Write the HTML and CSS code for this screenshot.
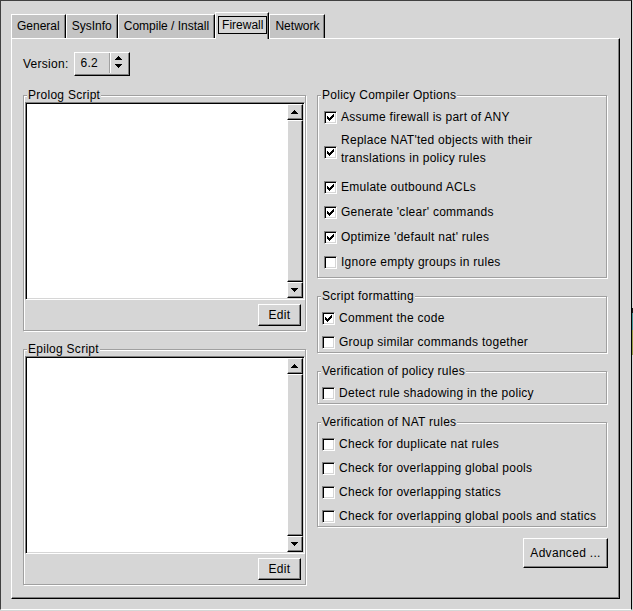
FILE: index.html
```html
<!DOCTYPE html>
<html>
<head>
<meta charset="utf-8">
<title>Firewall settings</title>
<link rel="stylesheet" href="styles.css">
</head>
<body>
<div class="window">
  <div class="tabbar">
    <div class="tab">General</div>
    <div class="tab">SysInfo</div>
    <div class="tab">Compile / Install</div>
    <div class="tab tab-active"><span class="focus">Firewall</span></div>
    <div class="tab">Network</div>
  </div>
  <div class="pane">
    <div class="version-row">
      <span class="label">Version:</span>
      <div class="spin">
        <span class="spin-value">6.2</span>
        <span class="spin-sep"></span>
        <svg class="spin-arrows" width="7" height="12" viewBox="0 0 7 12"><path d="M3 0h1v1h1v1h1v1h1v1H0V3h1V2h1V1h1z M0 8h7v1H6v1H5v1H4v1H3v-1H2v-1H1V9H0z" fill="#000"/></svg>
      </div>
    </div>
    <div class="columns">
      <div class="col-left">
        <div class="group group-script">
          <div class="legend">Prolog Script</div>
          <div class="textframe">
            <div class="viewport"></div>
            <div class="scrollbar">
              <div class="sb-btn"><svg width="7" height="4" viewBox="0 0 7 4"><path d="M3 0h1v1h1v1h1v1h1v1H0V3h1V2h1V1h1z" fill="#000"/></svg></div>
              <div class="sb-slider"></div>
              <div class="sb-btn"><svg width="7" height="4" viewBox="0 0 7 4"><path d="M0 0h7v1H6v1H5v1H4v1H3V3H2V2H1V1H0z" fill="#000"/></svg></div>
            </div>
          </div>
          <div class="btn-row"><button class="btn btn-edit">Edit</button></div>
        </div>
        <div class="group group-script group-gap">
          <div class="legend">Epilog Script</div>
          <div class="textframe">
            <div class="viewport"></div>
            <div class="scrollbar">
              <div class="sb-btn"><svg width="7" height="4" viewBox="0 0 7 4"><path d="M3 0h1v1h1v1h1v1h1v1H0V3h1V2h1V1h1z" fill="#000"/></svg></div>
              <div class="sb-slider"></div>
              <div class="sb-btn"><svg width="7" height="4" viewBox="0 0 7 4"><path d="M0 0h7v1H6v1H5v1H4v1H3V3H2V2H1V1H0z" fill="#000"/></svg></div>
            </div>
          </div>
          <div class="btn-row"><button class="btn btn-edit">Edit</button></div>
        </div>
      </div>
      <div class="col-right">
        <div class="group group-policy">
          <div class="legend">Policy Compiler Options</div>
          <div class="checks checks-policy">
            <div class="check"><span class="box"><svg width="7" height="7" viewBox="0 0 7 7"><path d="M0 2h1v1h1v1h1V3h1V2h1V1h1V0h1v3H6v1H5v1H4v1H3v1H2V6H1V5H0z" fill="#000"/></svg></span><span class="text">Assume firewall is part of ANY</span></div>
            <div class="check check-2"><span class="box"><svg width="7" height="7" viewBox="0 0 7 7"><path d="M0 2h1v1h1v1h1V3h1V2h1V1h1V0h1v3H6v1H5v1H4v1H3v1H2V6H1V5H0z" fill="#000"/></svg></span><span class="text">Replace NAT'ted objects with their<br>translations in policy rules</span></div>
            <div class="check"><span class="box"><svg width="7" height="7" viewBox="0 0 7 7"><path d="M0 2h1v1h1v1h1V3h1V2h1V1h1V0h1v3H6v1H5v1H4v1H3v1H2V6H1V5H0z" fill="#000"/></svg></span><span class="text">Emulate outbound ACLs</span></div>
            <div class="check"><span class="box"><svg width="7" height="7" viewBox="0 0 7 7"><path d="M0 2h1v1h1v1h1V3h1V2h1V1h1V0h1v3H6v1H5v1H4v1H3v1H2V6H1V5H0z" fill="#000"/></svg></span><span class="text">Generate 'clear' commands</span></div>
            <div class="check"><span class="box"><svg width="7" height="7" viewBox="0 0 7 7"><path d="M0 2h1v1h1v1h1V3h1V2h1V1h1V0h1v3H6v1H5v1H4v1H3v1H2V6H1V5H0z" fill="#000"/></svg></span><span class="text">Optimize 'default nat' rules</span></div>
            <div class="check"><span class="box"></span><span class="text">Ignore empty groups in rules</span></div>
          </div>
        </div>
        <div class="group group-small group-gap">
          <div class="legend">Script formatting</div>
          <div class="checks">
            <div class="check"><span class="box"><svg width="7" height="7" viewBox="0 0 7 7"><path d="M0 2h1v1h1v1h1V3h1V2h1V1h1V0h1v3H6v1H5v1H4v1H3v1H2V6H1V5H0z" fill="#000"/></svg></span><span class="text">Comment the code</span></div>
            <div class="check"><span class="box"></span><span class="text">Group similar commands together</span></div>
          </div>
        </div>
        <div class="group group-small group-gap">
          <div class="legend">Verification of policy rules</div>
          <div class="checks">
            <div class="check"><span class="box"></span><span class="text">Detect rule shadowing in the policy</span></div>
          </div>
        </div>
        <div class="group group-small group-gap">
          <div class="legend">Verification of NAT rules</div>
          <div class="checks">
            <div class="check"><span class="box"></span><span class="text">Check for duplicate nat rules</span></div>
            <div class="check"><span class="box"></span><span class="text">Check for overlapping global pools</span></div>
            <div class="check"><span class="box"></span><span class="text">Check for overlapping statics</span></div>
            <div class="check"><span class="box"></span><span class="text">Check for overlapping global pools and statics</span></div>
          </div>
        </div>
        <button class="btn btn-advanced">Advanced ...</button>
      </div>
    </div>
  </div>
</div>
</body>
</html>
```

FILE: styles.css
```css
* {
  box-sizing: border-box;
}

html,
body {
  margin: 0;
  padding: 0;
}

body {
  width: 633px;
  height: 611px;
  overflow: hidden;
  font-family: "Liberation Sans", Arial, sans-serif;
  font-size: 12px;
  letter-spacing: 0.27px;
  color: #000;
  background: linear-gradient(#d6d6d6 0 308px, #1a1a1a 308px 313px, #4a9a9a 313px 330px, #9aa04a 330px 355px, #d6d6d6 355px);
}

.window {
  width: 632px;
  height: 610px;
  background: #d6d6d6;
  border-top: 1px solid #404040;
  border-left: 1px solid #404040;
  border-right: 1px solid #000;
  border-bottom: 1px solid #fff;
  padding: 11px 0 0 10px;
}

/* ---------- tabs ---------- */
.tabbar {
  display: flex;
  align-items: flex-end;
  height: 26px;
  letter-spacing: 0;
}

.tab {
  height: 24px;
  line-height: 23px;
  padding: 0 5px;
  background: #c4c4c4;
  border-top: 1px solid #fff;
  border-left: 1px solid #fff;
  border-right: 1px solid #000;
  box-shadow: inset -1px 0 0 #808080;
  white-space: nowrap;
}

.tab-active {
  position: relative;
  z-index: 1;
  height: 27px;
  margin-bottom: -1px;
  padding: 3px 1px 0 2px;
  line-height: 16px;
  background: #d6d6d6;
  display: flex;
  align-items: flex-start;
}

.focus {
  border: 1px solid #000;
  padding: 0 3px;
  line-height: 16px;
}

/* ---------- pane ---------- */
.pane {
  width: 609px;
  height: 561px;
  border-top: 1px solid #fff;
  border-left: 1px solid #fff;
  border-right: 1px solid #000;
  border-bottom: 1px solid #000;
  box-shadow: inset -1px -1px 0 #808080;
  padding: 13px 0 0 11px;
}

.version-row {
  display: flex;
  align-items: center;
  height: 24px;
  gap: 5px;
}

.label {
  line-height: 16px;
}

.spin {
  width: 56px;
  height: 24px;
  display: flex;
  align-items: flex-start;
  border-top: 1px solid #fff;
  border-left: 1px solid #fff;
  border-right: 1px solid #000;
  border-bottom: 1px solid #000;
  box-shadow: inset -1px -1px 0 #808080;
}

.spin-value {
  width: 34px;
  padding-left: 6px;
  line-height: 21px;
}

.spin-sep {
  width: 2px;
  height: 20px;
  border-left: 1px solid #a0a0a0;
  border-right: 1px solid #fff;
}

.spin-arrows {
  display: block;
  margin: 3px 0 0 4px;
}

/* ---------- columns ---------- */
.columns {
  display: flex;
  gap: 10px;
  margin-top: 19px;
}

.col-left {
  width: 284px;
  display: flex;
  flex-direction: column;
}

.col-right {
  width: 291px;
  display: flex;
  flex-direction: column;
}

/* ---------- group boxes ---------- */
.group {
  border: 1px solid #a0a0a0;
  box-shadow: inset 1px 1px 0 #fff, 1px 1px 0 #fff;
}

.group-gap {
  margin-top: 18px;
}

.legend {
  display: table;
  margin: -8px 0 0 3px;
  padding: 0 1px;
  line-height: 14px;
  background: #d6d6d6;
  white-space: nowrap;
}

.group-script {
  width: 283px;
  padding: 0 0 4px 1px;
}

.group-script .legend {
  margin-left: 2px;
}

.group-policy {
  width: 290px;
  padding: 0 0 7px 6px;
}

.group-policy .legend {
  margin-left: -3px;
}

.group-small {
  width: 290px;
  padding: 0 0 2px 4px;
}

.group-small .legend {
  margin-left: -1px;
}

/* ---------- text edit ---------- */
.textframe {
  display: flex;
  height: 198px;
  padding: 1px;
  border-top: 1px solid #808080;
  border-left: 1px solid #808080;
  border-right: 1px solid #fff;
  border-bottom: 1px solid #fff;
  box-shadow: inset 1px 1px 0 #000, inset -1px -1px 0 #d6d6d6;
}

.viewport {
  flex: 1;
  background: #fff;
}

.scrollbar {
  width: 16px;
  display: flex;
  flex-direction: column;
}

.sb-btn,
.sb-slider {
  background: #d6d6d6;
  border-top: 1px solid #fff;
  border-left: 1px solid #fff;
  border-right: 1px solid #000;
  border-bottom: 1px solid #000;
  box-shadow: inset -1px -1px 0 #808080;
}

.sb-btn {
  height: 16px;
  display: flex;
  align-items: center;
  justify-content: center;
  padding: 0 1px 1px 0;
}

.sb-btn svg {
  display: block;
}

.sb-slider {
  flex: 1;
}

/* ---------- buttons ---------- */
.btn {
  font-family: inherit;
  font-size: 12px;
  letter-spacing: 0.3px;
  color: #000;
  background: #d6d6d6;
  padding: 0;
  margin: 0;
  border-top: 1px solid #fff;
  border-left: 1px solid #fff;
  border-right: 1px solid #000;
  border-bottom: 1px solid #000;
  box-shadow: inset -1px -1px 0 #808080;
  border-radius: 0;
  line-height: 16px;
}

.btn-row {
  display: flex;
  justify-content: flex-end;
  margin-top: 4px;
  padding-right: 4px;
}

.btn-edit {
  width: 43px;
  height: 22px;
}

.btn-advanced {
  align-self: flex-end;
  width: 85px;
  height: 30px;
  margin-top: 11px;
}

/* ---------- check boxes ---------- */
.checks {
  display: flex;
  flex-direction: column;
  gap: 8px;
  margin-top: 7px;
}

.checks-policy {
  gap: 9px;
}

.check {
  display: flex;
  align-items: center;
  min-height: 16px;
  line-height: 16px;
  white-space: nowrap;
}

.check-2 .text {
  line-height: 18px;
  margin: -3px 0 3px;
}

.box {
  width: 13px;
  height: 13px;
  flex: none;
  margin-right: 4px;
  background: #fff;
  border-top: 1px solid #808080;
  border-left: 1px solid #808080;
  border-right: 1px solid #fff;
  border-bottom: 1px solid #fff;
  box-shadow: inset 1px 1px 0 #000, inset -1px -1px 0 #d6d6d6;
  display: flex;
  align-items: center;
  justify-content: center;
}

.box svg {
  display: block;
}
```
